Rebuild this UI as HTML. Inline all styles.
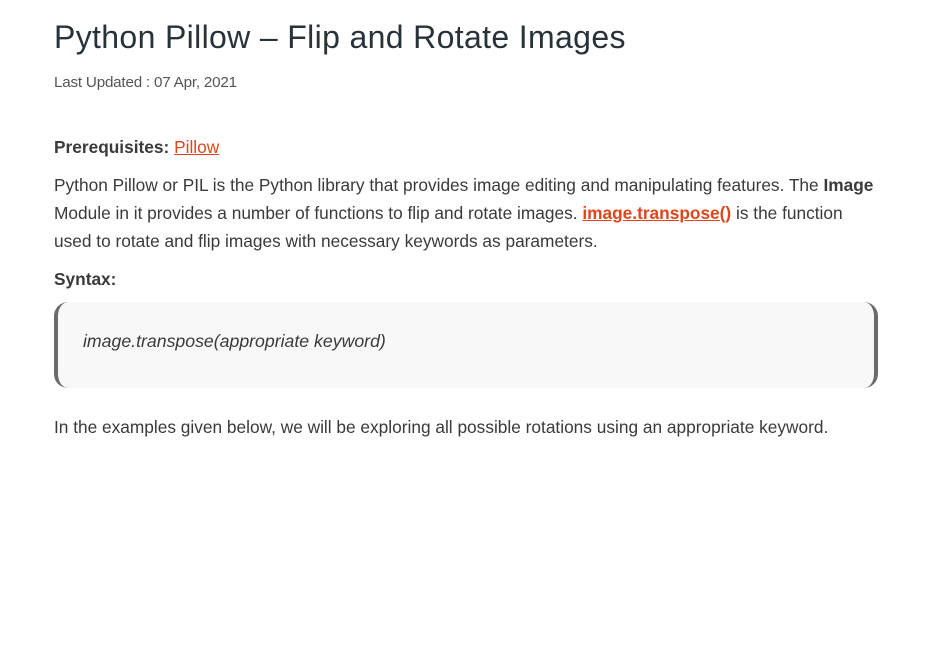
<!DOCTYPE html>
<html><head><meta charset="utf-8"><style>
body{margin:0;background:#fff;font-family:"Liberation Sans",sans-serif;color:#273239;}
.w{position:absolute;left:54px;width:840px;white-space:nowrap;}
h1{position:absolute;left:54px;top:19px;margin:0;font-size:32px;font-weight:normal;letter-spacing:0.35px;color:#273239;white-space:nowrap;}
.date{position:absolute;left:54px;top:74px;font-size:15.2px;color:#555;letter-spacing:-0.2px;}
p{margin:0;font-size:17.3px;letter-spacing:0;color:#3a3a3a;}
a{color:#e0461c;text-decoration:underline;}
.box{position:absolute;left:54px;top:302px;width:816px;height:86px;background:#f8f8f8;border-left:4px solid #6b6b6b;border-right:4px solid #6b6b6b;border-radius:14px;}
.box span{position:absolute;left:25px;top:29px;font-style:italic;font-size:17.7px;letter-spacing:0;color:#3a3a3a;}
</style></head><body>
<h1>Python Pillow – Flip and Rotate Images</h1>
<div class="date">Last Updated : 07 Apr, 2021</div>
<p class="w" style="top:137px"><b>Prerequisites:</b> <a>Pillow</a></p>
<p class="w" style="top:171px;line-height:28px">Python Pillow or PIL is the Python library that provides image editing and manipulating features. The <b>Image</b><br>Module in it provides a number of functions to flip and rotate images. <a><b>image.transpose()</b></a> is the function<br>used to rotate and flip images with necessary keywords as parameters.</p>
<p class="w" style="top:269px"><b>Syntax:</b></p>
<div class="box"><span>image.transpose(appropriate keyword)</span></div>
<p class="w" style="top:417px">In the examples given below, we will be exploring all possible rotations using an appropriate keyword.</p>
</body></html>
